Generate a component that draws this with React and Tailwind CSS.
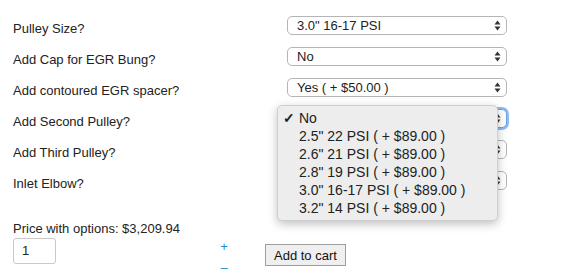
import React from "react";

const font = { fontFamily: '"Liberation Sans", Arial, sans-serif' };

function Arrows() {
  return (
    <svg width="7" height="11" viewBox="0 0 7 11" className="shrink-0">
      <path d="M3.5 0.5 L6.5 4.5 L0.5 4.5 Z" fill="#333" />
      <path d="M3.5 10.5 L6.5 6.5 L0.5 6.5 Z" fill="#333" />
    </svg>
  );
}

function Select({ value, focused }) {
  return (
    <div
      className={
        "w-[220px] h-[19px] rounded-[5px] bg-white flex items-center justify-between pl-[9px] pr-[5px] text-[13px] text-[#222] " +
        (focused
          ? "border border-[#6aa2ea] shadow-[0_0_0_2px_#8fbcf3]"
          : "border border-[#b5b5b5]")
      }
    >
      <span className="leading-none">{value}</span>
      <Arrows />
    </div>
  );
}

const rows = [
  ["Pulley Size?", '3.0" 16-17 PSI'],
  ["Add Cap for EGR Bung?", "No"],
  ["Add contoured EGR spacer?", "Yes ( + $50.00 )"],
  ["Add Second Pulley?", "No", true],
  ["Add Third Pulley?", "No"],
  ["Inlet Elbow?", "No"],
];

const items = [
  '2.5" 22 PSI ( + $89.00 )',
  '2.6" 21 PSI ( + $89.00 )',
  '2.8" 19 PSI ( + $89.00 )',
  '3.0" 16-17 PSI ( + $89.00 )',
  '3.2" 14 PSI ( + $89.00 )',
];

export default function App() {
  return (
    <div className="relative w-[567px] h-[276px] bg-white overflow-hidden" style={font}>
      <div className="flex flex-col gap-[12px] pt-[16px] pl-[13px]">
        {rows.map(([label, value, focused]) => (
          <div key={label} className="flex items-start h-[19px]">
            <div className="w-[274px] text-[13px] text-[#222] leading-none pt-[6px]">{label}</div>
            <Select value={value} focused={focused} />
          </div>
        ))}
      </div>
      <div className="pl-[13px] pt-[32px] text-[13px] text-[#222] leading-none">
        Price with options: $3,209.94
      </div>
      <div className="flex items-start pl-[13px] pt-[3px]">
        <div className="w-[43px] h-[26px] border border-[#c9c9c9] rounded-[3px] flex items-center pl-[8px] text-[13px] text-[#222]">
          1
        </div>
        <div className="ml-[163px] flex flex-col items-center text-[#1a8fd6] text-[13px] leading-none w-[10px] pt-[2px]">
          <span>+</span>
          <span className="mt-[8px]">–</span>
        </div>
        <button className="ml-[36px] mt-[6px] h-[22px] px-[8px] border border-[#9d9d9d] bg-[#efefef] text-[13px] text-[#111] leading-none">
          Add to cart
        </button>
      </div>

      <div className="absolute left-[277px] top-[105px] w-[221px] h-[116px] rounded-[5px] bg-[#ededed] border border-[#cfcfcf] shadow-[0_3px_10px_rgba(0,0,0,0.25)] pt-[3px] text-[14px] text-[#222]">
        <div className="flex items-center h-[18px]">
          <span className="w-[21px] pl-[5px] text-[14px] font-bold">✓</span>
          <span>No</span>
        </div>
        {items.map((t) => (
          <div key={t} className="flex items-center h-[18px] pl-[21px]">
            {t}
          </div>
        ))}
      </div>
    </div>
  );
}
